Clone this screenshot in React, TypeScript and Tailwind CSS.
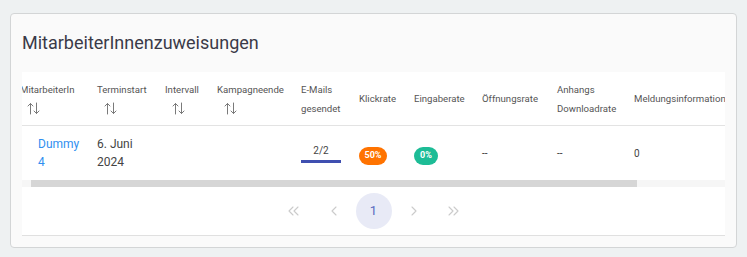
import React from "react";

const SortIcon = () => (
  <svg width="13" height="13" viewBox="0 0 13 13" fill="none" stroke="#7a7a7a" strokeWidth="1" strokeLinecap="round" strokeLinejoin="round">
    <path d="M3.5 12V1.5M1 4L3.5 1.5L6 4" />
    <path d="M9.5 1V11.5M7 9L9.5 11.5L12 9" />
  </svg>
);

const Chev = ({ dir, double }: { dir: "l" | "r"; double?: boolean }) => {
  const one = (x: number) =>
    dir === "l" ? `M${x + 4} 1L${x} 5L${x + 4} 9` : `M${x} 1L${x + 4} 5L${x} 9`;
  return (
    <svg width={double ? 11 : 6} height="10" viewBox={`0 0 ${double ? 11 : 6} 10`} fill="none" stroke="#cbcbcb" strokeWidth="1.1" strokeLinecap="round" strokeLinejoin="round">
      <path d={one(1)} />
      {double && <path d={one(6)} />}
    </svg>
  );
};

const cols = [
  { w: "w-[77px]", label: ["MitarbeiterIn"], sort: true },
  { w: "w-[68px]", label: ["Terminstart"], sort: true },
  { w: "w-[52px]", label: ["Intervall"], sort: true },
  { w: "w-[84px]", label: ["Kampagneende"], sort: true },
  { w: "w-[58px]", label: ["E-Mails", "gesendet"] },
  { w: "w-[55px]", label: ["Klickrate"] },
  { w: "w-[68px]", label: ["Eingaberate"] },
  { w: "w-[75px]", label: ["Öffnungsrate"] },
  { w: "w-[77px]", label: ["Anhangs", "Downloadrate"] },
  { w: "w-[110px]", label: ["Meldungsinformation"] },
];

export default function App() {
  return (
    <div className="w-[747px] h-[257px] bg-[#eef1f2] pt-[13px] pl-[10px]" style={{ fontFamily: "Roboto, 'Noto Sans', sans-serif" }}>
      <div className="w-[727px] h-[235px] bg-[#fafafa] border border-[#d3d5d6] rounded-[4px] px-[11px]">
        <div className="pt-[17px] h-[58px] text-[18px] leading-[24px] text-[#3a3a48]">MitarbeiterInnenzuweisungen</div>
        <div className="w-[703px] overflow-hidden">
          <div className="bg-white">
            <div className="overflow-hidden">
              <div className="flex -ml-[2px] w-[760px] h-[54px] border-b border-[#e3e3e3] items-center text-[9.6px] text-[#555]">
                {cols.map((c, i) => (
                  <div key={i} className={`${c.w} shrink-0 flex flex-col`}>
                    {c.label.map((l, j) => (
                      <div key={j} className="leading-[19px] whitespace-nowrap">{l}</div>
                    ))}
                    {c.sort && (
                      <div className="h-[19px] flex items-center pl-[7px]">
                        <SortIcon />
                      </div>
                    )}
                  </div>
                ))}
              </div>
              <div className="flex -ml-[2px] w-[760px] h-[54px] items-center text-[#444]">
                <div className="w-[77px] shrink-0 pl-[18px] text-[12px] leading-[18px] text-[#2f8ff0]">
                  <div>Dummy</div>
                  <div>4</div>
                </div>
                <div className="w-[68px] shrink-0 text-[12px] leading-[18px] text-[#444]">
                  <div>6. Juni</div>
                  <div>2024</div>
                </div>
                <div className="w-[52px] shrink-0" />
                <div className="w-[84px] shrink-0" />
                <div className="w-[58px] shrink-0">
                  <div className="w-[40px] flex flex-col items-center">
                    <div className="text-[10px] leading-[14px] text-[#444]">2/2</div>
                    <div className="w-[40px] h-[3px] bg-[#3f4fb0] mt-[2px]" />
                  </div>
                </div>
                <div className="w-[55px] shrink-0">
                  <span className="inline-flex items-center justify-center w-[28px] h-[18px] rounded-full bg-[#ff7300] text-white text-[9px] font-bold">50%</span>
                </div>
                <div className="w-[68px] shrink-0">
                  <span className="inline-flex items-center justify-center w-[24px] h-[18px] rounded-full bg-[#1dbc96] text-white text-[9px] font-bold">0%</span>
                </div>
                <div className="w-[75px] shrink-0 text-[10px] text-[#333]">--</div>
                <div className="w-[77px] shrink-0 text-[10px] text-[#333]">--</div>
                <div className="w-[110px] shrink-0 text-[10px] text-[#444]">0</div>
              </div>
            </div>
            <div className="h-[7px] bg-[#f6f6f6] relative">
              <div className="absolute left-[9px] top-0 h-[7px] w-[606px] bg-[#d6d6d6]" />
            </div>
          </div>
          <div className="bg-white h-[49px] border-b border-[#e0e0e0] flex items-center justify-center">
            <div className="w-10 flex justify-center"><Chev dir="l" double /></div>
            <div className="w-10 flex justify-center"><Chev dir="l" /></div>
            <div className="w-10 flex justify-center">
              <div className="w-[36px] h-[36px] rounded-full bg-[#e8eaf6] flex items-center justify-center text-[13px] text-[#5c6bc0]">1</div>
            </div>
            <div className="w-10 flex justify-center"><Chev dir="r" /></div>
            <div className="w-10 flex justify-center"><Chev dir="r" double /></div>
          </div>
        </div>
      </div>
    </div>
  );
}
